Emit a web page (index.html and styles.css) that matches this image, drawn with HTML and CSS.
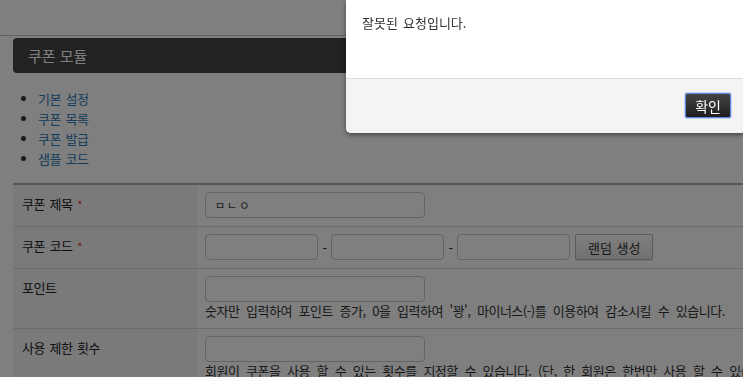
FILE: index.html
```html
<!DOCTYPE html>
<html lang="ko">
<head>
  <meta charset="UTF-8" />
  <meta name="viewport" content="width=device-width, initial-scale=1.0"/>
  <title>쿠폰 모듈</title>
  <link rel="stylesheet" href="styles.css">
</head>
<body>
  <div class="page">
    <div class="topbar"></div>

    <div class="content">
      <h1 class="module-title">쿠폰 모듈</h1>

      <ul class="sub-nav">
        <li><a href="#">기본 설정</a></li>
        <li><a href="#">쿠폰 목록</a></li>
        <li><a href="#">쿠폰 발급</a></li>
        <li><a href="#">샘플 코드</a></li>
      </ul>

      <table class="form-table">
        <tr>
          <th>쿠폰 제목 <em>*</em></th>
          <td><input type="text" class="text-input" value="ㅁㄴㅇ"></td>
        </tr>
        <tr>
          <th>쿠폰 코드 <em>*</em></th>
          <td>
            <div class="code-row">
              <input type="text" class="code-input">
              <span class="dash">-</span>
              <input type="text" class="code-input">
              <span class="dash">-</span>
              <input type="text" class="code-input">
              <button class="btn">랜덤 생성</button>
            </div>
          </td>
        </tr>
        <tr>
          <th>포인트</th>
          <td>
            <input type="text" class="text-input">
            <p class="desc">숫자만 입력하여 포인트 증가, 0을 입력하여 '꽝', 마이너스(-)를 이용하여 감소시킬 수 있습니다.</p>
          </td>
        </tr>
        <tr>
          <th>사용 제한 횟수</th>
          <td>
            <input type="text" class="text-input">
            <p class="desc">회원이 쿠폰을 사용 할 수 있는 횟수를 지정할 수 있습니다. (단, 한 회원은 한번만 사용 할 수 있습니다.)</p>
          </td>
        </tr>
      </table>
    </div>
  </div>

  <div class="overlay"></div>

  <div class="modal">
    <div class="modal-body">잘못된 요청입니다.</div>
    <div class="modal-foot">
      <button class="btn-ok">확인</button>
    </div>
  </div>
</body>
</html>
```

FILE: styles.css
```css
html {
  overflow: hidden;
}

body {
  margin: 0;
  background: #fff;
  color: #333;
  font-family: "Noto Sans CJK KR", "Noto Sans", sans-serif;
  font-size: 13px;
  letter-spacing: -0.5px;
  word-spacing: 1.5px;
}

.page {
  width: 1100px;
}

.topbar {
  height: 35px;
  border-bottom: 1px solid #c4c4c4;
}

.content {
  padding: 0 0 0 13px;
}

.module-title {
  margin: 2px 0 0;
  height: 35px;
  line-height: 35px;
  padding-left: 15px;
  background: #444;
  color: #fff;
  font-size: 15px;
  font-weight: normal;
  letter-spacing: 0;
  word-spacing: 0;
  border-radius: 4px;
}

.sub-nav {
  margin: 16px 0 14px;
  padding-left: 25px;
  line-height: 20px;
}

.sub-nav a {
  color: #2a78b4;
  text-decoration: none;
}

.form-table {
  width: 100%;
  border-collapse: collapse;
  border-top: 2px solid #aaa;
}

.form-table th {
  width: 166px;
  padding: 10px 9px;
  line-height: 18px;
  text-align: left;
  vertical-align: top;
  font-weight: normal;
  color: #222;
  background: #f4f4f4;
  border-bottom: 1px solid #d8d8d8;
}

.form-table th em {
  color: #d33;
  font-style: normal;
  font-size: 11px;
}

.form-table td {
  padding: 7px 8px 8px;
  vertical-align: top;
  border-bottom: 1px solid #d8d8d8;
}

.text-input,
.code-input {
  box-sizing: border-box;
  height: 26px;
  margin: 0;
  padding: 0 9px;
  border: 1px solid #c8c8c8;
  border-radius: 4px;
  background: #fff;
  font-family: inherit;
  font-size: 11px;
  color: #333;
  letter-spacing: 2px;
}

.text-input {
  display: block;
  width: 220px;
}

.code-input {
  width: 113px;
}

.code-row {
  display: flex;
  align-items: center;
  gap: 4px;
}

.dash {
  width: 5px;
  text-align: center;
  color: #222;
}

.btn {
  height: 26px;
  margin-left: 1px;
  padding: 0 12px;
  border: 1px solid #b5b5b5;
  border-radius: 2px;
  background: linear-gradient(#fdfdfd, #e2e2e2);
  box-shadow: 0 1px 1px rgba(0, 0, 0, 0.1);
  font-family: inherit;
  font-size: 13px;
  letter-spacing: 0;
  word-spacing: 1px;
  color: #333;
}

.desc {
  margin: 0;
  line-height: 18px;
  color: #333;
  white-space: nowrap;
  word-spacing: 3.5px;
}

.overlay {
  position: fixed;
  inset: 0;
  background: rgba(0, 0, 0, 0.5);
}

.modal {
  position: fixed;
  top: 0;
  left: 346px;
  width: 400px;
  background: #fff;
  border-radius: 0 0 5px 5px;
  box-shadow: 0 2px 5px rgba(0, 0, 0, 0.45);
  overflow: hidden;
}

.modal-body {
  height: 48px;
  padding: 14px 16px 16px;
  line-height: 18px;
  color: #333;
  letter-spacing: 0;
}

.modal-foot {
  display: flex;
  justify-content: flex-end;
  padding: 14px 15px 15px;
  background: #f4f4f4;
  border-top: 1px solid #ddd;
}

.btn-ok {
  height: 25px;
  padding: 0 9px;
  border: 1px solid #5b8de0;
  border-radius: 2px;
  background: linear-gradient(#444, #1e1e1e);
  box-shadow: 0 0 0 1px rgba(91, 141, 224, 0.35);
  color: #fff;
  font-family: inherit;
  font-size: 14px;
  letter-spacing: 0;
}
```
